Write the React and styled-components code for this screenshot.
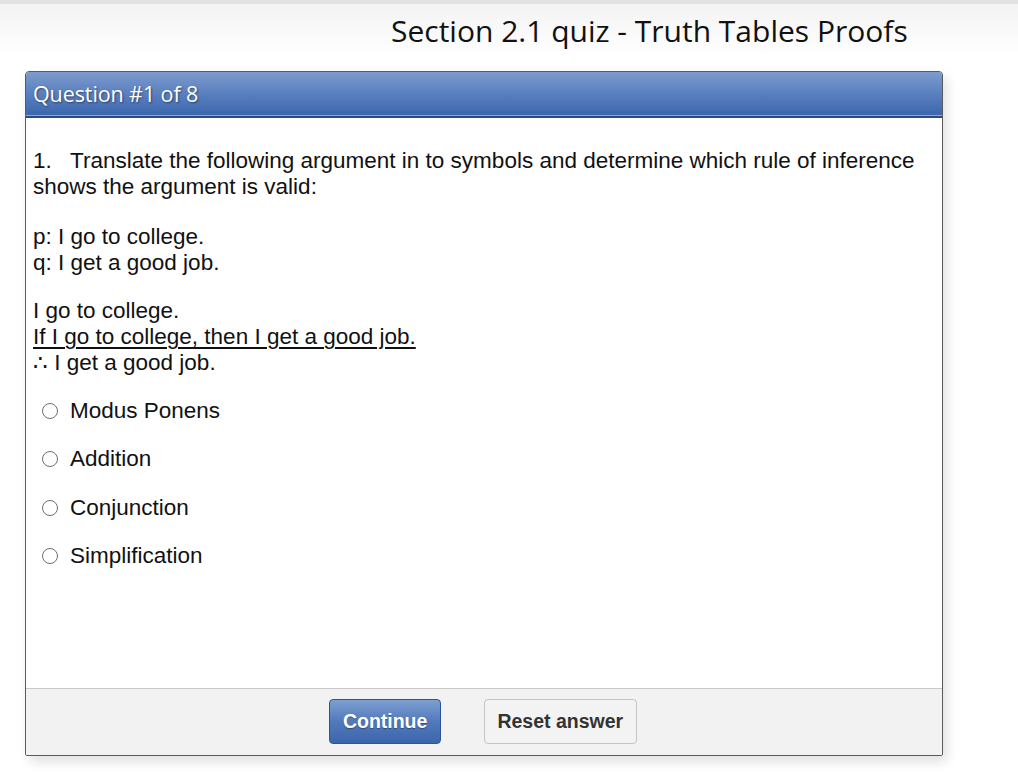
import React from 'react'
import styled, { createGlobalStyle } from 'styled-components'

const GlobalStyle = createGlobalStyle`
  html, body {
    margin: 0;
    padding: 0;
    background: #fff;
  }
  body {
    font-family: 'Liberation Sans', Arial, sans-serif;
  }
`

const Page = styled.div`
  width: 1018px;
  min-height: 774px;
  border-top: 4px solid #e2e2e2;
  background: linear-gradient(to bottom, #f3f3f3 0px, #ffffff 52px, #ffffff 100%);
`

const Title = styled.h1`
  margin: 0;
  padding: 7px 0 0 391px;
  height: 57px;
  box-sizing: border-box;
  font-family: 'Open Sans', sans-serif;
  font-weight: 400;
  font-size: 30px;
  color: #111;
  line-height: 40px;
`

const Card = styled.section`
  margin: 10px 0 0 25px;
  width: 916px;
  border: 1px solid #5a5a5a;
  border-radius: 4px 4px 2px 2px;
  background: #fff;
  box-shadow: 4px 6px 12px rgba(0, 0, 0, 0.12);
  overflow: hidden;
  display: flex;
  flex-direction: column;
`

const Header = styled.div`
  height: 46px;
  box-sizing: border-box;
  padding: 0 7px 2px;
  display: flex;
  align-items: center;
  background: linear-gradient(to bottom, #7b9ccd 0%, #5a7fbf 50%, #3b66ad 100%);
  border-bottom: 2px solid #2b4a85;
  box-shadow: inset 0 -1px 0 #8fa9d6;
  font-family: 'Open Sans', sans-serif;
  font-size: 21.5px;
  letter-spacing: -0.1px;
  color: #fff;
  text-shadow: 1px 1px 2px rgba(0, 0, 0, 0.45);
`

const Body = styled.div`
  height: 570px;
  padding: 30px 7px 0 7px;
  box-sizing: border-box;
  font-size: 22.5px;
  color: #111;
`

const Para = styled.p`
  margin: 0 0 ${(p) => p.$gap || 0}px 0;
  line-height: 26px;
`

const Num = styled.span`
  display: inline-block;
  width: 37px;
`

const Under = styled.span`
  text-decoration: underline;
  text-decoration-thickness: 1.5px;
  text-underline-offset: 3px;
`

const Options = styled.div`
  display: flex;
  flex-direction: column;
  gap: 22.3px;
  margin-top: 22px;
  padding-left: 9px;
`

const Option = styled.label`
  display: flex;
  align-items: center;
  gap: 12px;
  height: 26px;
  font-size: 22.5px;
`

const Radio = styled.span`
  width: 16px;
  height: 16px;
  box-sizing: border-box;
  border: 1.3px solid #6f6f6f;
  border-radius: 50%;
  background: #fff;
  flex-shrink: 0;
`

const Footer = styled.div`
  height: 67px;
  box-sizing: border-box;
  padding: 0 2px 1px 0;
  background: #f2f2f2;
  border-top: 1px solid #c8c8c8;
  display: flex;
  justify-content: center;
  align-items: center;
  gap: 43px;
`

const Button = styled.button`
  height: 45px;
  box-sizing: border-box;
  padding: 0 12.5px;
  border-radius: 4px;
  font-family: 'Liberation Sans', Arial, sans-serif;
  font-weight: 700;
  font-size: 19.5px;
  cursor: pointer;
  color: ${(p) => (p.$primary ? '#fff' : '#333')};
  border: 1px solid ${(p) => (p.$primary ? '#2d5597' : '#c4c4c4')};
  background: ${(p) =>
    p.$primary
      ? 'linear-gradient(to bottom, #7e9fd0 0%, #5279bb 50%, #3c66ac 100%)'
      : '#f3f3f3'};
  text-shadow: ${(p) => (p.$primary ? '0 1px 1px rgba(0,0,0,0.35)' : 'none')};
`

const options = ['Modus Ponens', 'Addition', 'Conjunction', 'Simplification']

export default function App() {
  return (
    <>
      <GlobalStyle />
      <Page>
        <Title>Section 2.1 quiz - Truth Tables Proofs</Title>
        <Card>
          <Header>Question #1 of 8</Header>
          <Body>
            <Para $gap={24}>
              <Num>1.</Num>Translate the following argument in to symbols and determine which rule of inference shows the argument is valid:
            </Para>
            <Para $gap={22}>
              p: I go to college.
              <br />
              q: I get a good job.
            </Para>
            <Para>
              I go to college.
              <br />
              <Under>If I go to college, then I get a good job.</Under>
              <br />∴ I get a good job.
            </Para>
            <Options>
              {options.map((o) => (
                <Option key={o}>
                  <Radio />
                  {o}
                </Option>
              ))}
            </Options>
          </Body>
          <Footer>
            <Button $primary>Continue</Button>
            <Button>Reset answer</Button>
          </Footer>
        </Card>
      </Page>
    </>
  )
}
